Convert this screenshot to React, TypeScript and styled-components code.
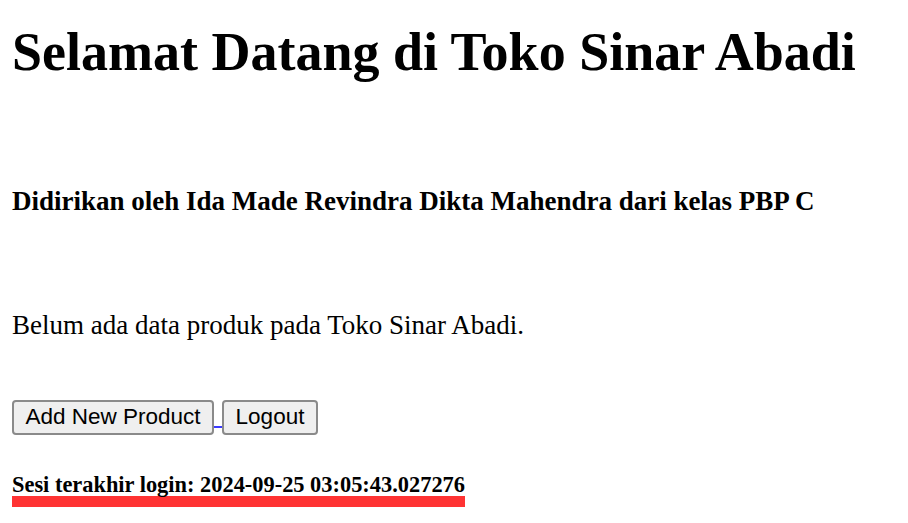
import React from 'react';
import styled, { createGlobalStyle } from 'styled-components';

const GlobalStyle = createGlobalStyle`
  html, body {
    margin: 0;
    padding: 0;
    background: #fff;
  }
  body {
    font-family: "Liberation Serif", "Times New Roman", serif;
    color: #000;
  }
`;

const Page = styled.main`
  display: flex;
  flex-direction: column;
  align-items: flex-start;
  padding: 0 12px;
`;

const Title = styled.h1`
  font-size: 54px;
  font-weight: bold;
  line-height: normal;
  margin: 21px 0 0;
`;

const Subtitle = styled.h4`
  font-size: 27px;
  font-weight: bold;
  line-height: normal;
  margin: 103px 0 0;
`;

const Message = styled.p`
  font-size: 27px;
  line-height: normal;
  margin: 93px 0 0;
`;

const ButtonRow = styled.div`
  display: flex;
  align-items: flex-start;
  margin-top: 58.6px;
`;

const Button = styled.button`
  font-family: "Liberation Sans", Arial, sans-serif;
  font-size: 22.5px;
  line-height: normal;
  color: #000;
  background: #efefef;
  border: 2px solid #8a8a8a;
  border-radius: 4px;
  padding: 2.6px 11.5px;
  cursor: pointer;
`;

const LinkSpace = styled.a`
  display: block;
  width: 8px;
  height: 26px;
  border-bottom: 2px solid #3b3bff;
`;

const LastLogin = styled.h5`
  width: fit-content;
  font-size: 22.4px;
  font-weight: bold;
  line-height: 1;
  margin: 39px 0 0;
  border-bottom: 11.5px solid #ff3333;
`;

const App = () => {
  return (
    <React.Fragment>
      <GlobalStyle />
      <Page>
        <Title>Selamat Datang di Toko Sinar Abadi</Title>
        <Subtitle>Didirikan oleh Ida Made Revindra Dikta Mahendra dari kelas PBP C</Subtitle>
        <Message>Belum ada data produk pada Toko Sinar Abadi.</Message>
        <ButtonRow>
          <Button>Add New Product</Button>
          <LinkSpace href="#" />
          <Button>Logout</Button>
        </ButtonRow>
        <LastLogin>Sesi terakhir login: 2024-09-25 03:05:43.027276</LastLogin>
      </Page>
    </React.Fragment>
  )
}

export default App
